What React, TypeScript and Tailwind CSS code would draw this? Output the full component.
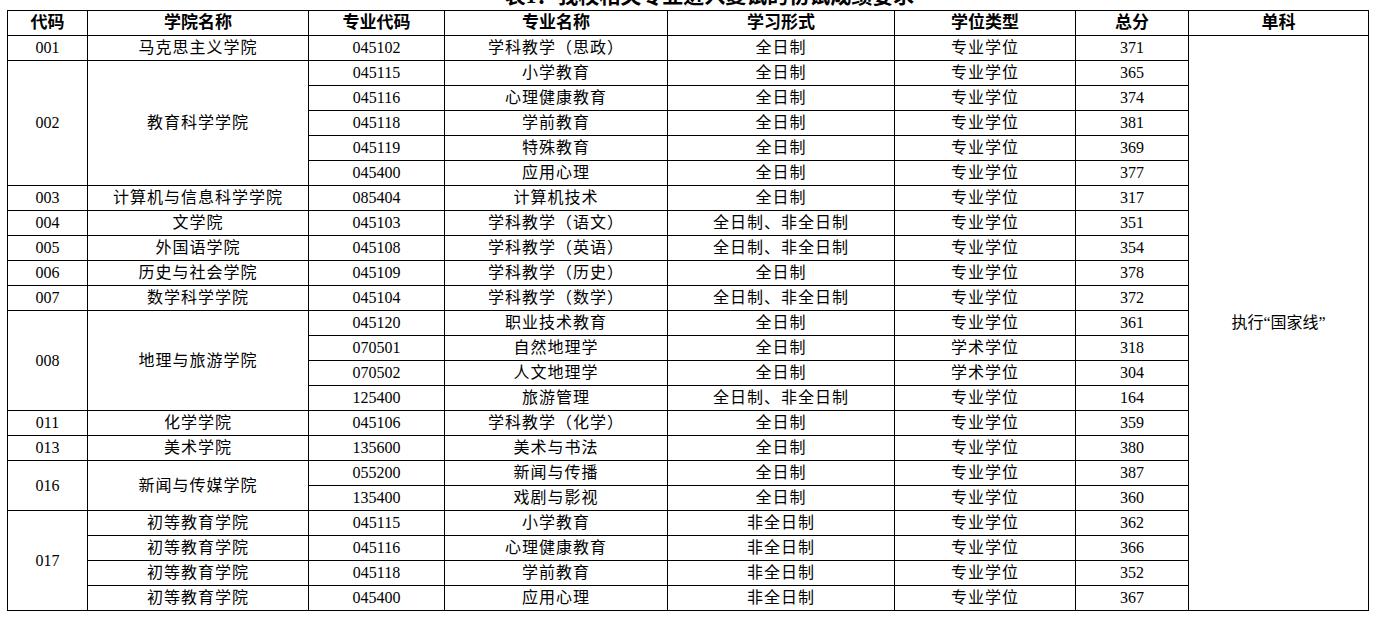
type Row = {
  code?: string;
  codeSpan?: number;
  college?: string;
  collegeSpan?: number;
  major: string;
  name: string;
  mode: string;
  degree: string;
  score: string;
};

const rows: Row[] = [
  { code: '001', college: '马克思主义学院', major: '045102', name: '学科教学（思政）', mode: '全日制', degree: '专业学位', score: '371' },
  { code: '002', codeSpan: 5, college: '教育科学学院', collegeSpan: 5, major: '045115', name: '小学教育', mode: '全日制', degree: '专业学位', score: '365' },
  { major: '045116', name: '心理健康教育', mode: '全日制', degree: '专业学位', score: '374' },
  { major: '045118', name: '学前教育', mode: '全日制', degree: '专业学位', score: '381' },
  { major: '045119', name: '特殊教育', mode: '全日制', degree: '专业学位', score: '369' },
  { major: '045400', name: '应用心理', mode: '全日制', degree: '专业学位', score: '377' },
  { code: '003', college: '计算机与信息科学学院', major: '085404', name: '计算机技术', mode: '全日制', degree: '专业学位', score: '317' },
  { code: '004', college: '文学院', major: '045103', name: '学科教学（语文）', mode: '全日制、非全日制', degree: '专业学位', score: '351' },
  { code: '005', college: '外国语学院', major: '045108', name: '学科教学（英语）', mode: '全日制、非全日制', degree: '专业学位', score: '354' },
  { code: '006', college: '历史与社会学院', major: '045109', name: '学科教学（历史）', mode: '全日制', degree: '专业学位', score: '378' },
  { code: '007', college: '数学科学学院', major: '045104', name: '学科教学（数学）', mode: '全日制、非全日制', degree: '专业学位', score: '372' },
  { code: '008', codeSpan: 4, college: '地理与旅游学院', collegeSpan: 4, major: '045120', name: '职业技术教育', mode: '全日制', degree: '专业学位', score: '361' },
  { major: '070501', name: '自然地理学', mode: '全日制', degree: '学术学位', score: '318' },
  { major: '070502', name: '人文地理学', mode: '全日制', degree: '学术学位', score: '304' },
  { major: '125400', name: '旅游管理', mode: '全日制、非全日制', degree: '专业学位', score: '164' },
  { code: '011', college: '化学学院', major: '045106', name: '学科教学（化学）', mode: '全日制', degree: '专业学位', score: '359' },
  { code: '013', college: '美术学院', major: '135600', name: '美术与书法', mode: '全日制', degree: '专业学位', score: '380' },
  { code: '016', codeSpan: 2, college: '新闻与传媒学院', collegeSpan: 2, major: '055200', name: '新闻与传播', mode: '全日制', degree: '专业学位', score: '387' },
  { major: '135400', name: '戏剧与影视', mode: '全日制', degree: '专业学位', score: '360' },
  { code: '017', codeSpan: 4, college: '初等教育学院', major: '045115', name: '小学教育', mode: '非全日制', degree: '专业学位', score: '362' },
  { college: '初等教育学院', major: '045116', name: '心理健康教育', mode: '非全日制', degree: '专业学位', score: '366' },
  { college: '初等教育学院', major: '045118', name: '学前教育', mode: '非全日制', degree: '专业学位', score: '352' },
  { college: '初等教育学院', major: '045400', name: '应用心理', mode: '非全日制', degree: '专业学位', score: '367' },
];

const headers = ['代码', '学院名称', '专业代码', '专业名称', '学习形式', '学位类型', '总分', '单科'];
const widths = [80, 221, 136, 223, 227, 181, 113, 180];

const td = 'border border-black p-0 text-center align-middle font-normal';

export default function App() {
  return (
    <div className="bg-white w-[1379px] h-[617px] overflow-hidden text-black" style={{ fontFamily: '"Liberation Serif", "Noto Sans CJK SC", serif' }}>
      {/* cut-off caption */}
      <div className="h-[10px] overflow-hidden pl-[40px]">
        <div className="-mt-[14px] text-center text-[21px] leading-[21px] font-bold">表1：我校相关专业进入复试的初试成绩要求</div>
      </div>

      <table className="ml-[7px] table-fixed border-collapse text-[16px] leading-[24px]" style={{ width: 1362 }}>
        <colgroup>
          {widths.map((w, i) => (
            <col key={i} style={{ width: w }} />
          ))}
        </colgroup>
        <thead>
          <tr className="h-[25px]">
            {headers.map(h => (
              <th key={h} className="border border-black p-0 text-center align-middle text-[17px] font-bold">
                {h}
              </th>
            ))}
          </tr>
        </thead>
        <tbody>
          {rows.map((r, i) => (
            <tr key={i} className="h-[25px]">
              {r.code && (
                <td className={td} rowSpan={r.codeSpan ?? 1}>
                  {r.code}
                </td>
              )}
              {r.college && (
                <td className={`${td} tracking-[1px]`} rowSpan={r.collegeSpan ?? 1}>
                  {r.college}
                </td>
              )}
              <td className={td}>{r.major}</td>
              <td className={`${td} tracking-[1px]`}>{r.name}</td>
              <td className={`${td} tracking-[1px]`}>{r.mode}</td>
              <td className={`${td} tracking-[1px]`}>{r.degree}</td>
              <td className={td}>{r.score}</td>
              {i === 0 && (
                <td className={td} rowSpan={rows.length}>
                  执行“国家线”
                </td>
              )}
            </tr>
          ))}
        </tbody>
      </table>
    </div>
  );
}
